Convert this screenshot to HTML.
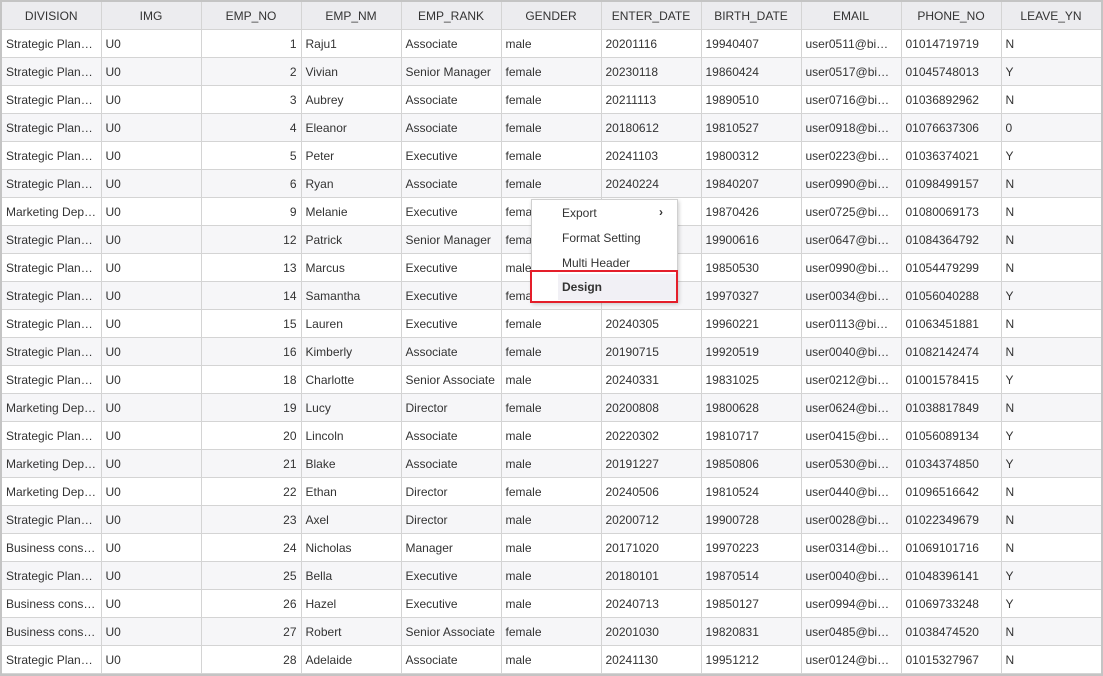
<!DOCTYPE html>
<html><head><meta charset="utf-8"><style>
body{margin:0;width:1103px;height:676px;overflow:hidden;background:#fff;font-family:"Liberation Sans","Noto Sans CJK KR",sans-serif;font-size:12px;color:#333}
.frame{position:absolute;left:0;top:0;width:1099px;height:672px;border:2px solid #c4c4c4;overflow:hidden}
table{border-collapse:collapse;table-layout:fixed;position:absolute;left:0;top:0;width:1099px}
td,th{border-right:1px solid #d4d4d4;border-bottom:1px solid #d4d4d4;height:27px;padding:0 4px;white-space:nowrap;overflow:hidden;text-overflow:ellipsis;font-weight:normal}
th{background:#ececef;height:27px;color:#333;text-align:center}
tr:nth-child(odd) td{background:#f6f6f8}
td.r{text-align:right}
.menu{position:absolute;left:531px;top:199px;width:145px;height:101px;background:#fff;border:1px solid #d0d0d0;box-shadow:1px 2px 4px rgba(0,0,0,.2)}
.mi{position:absolute;left:30px;font-size:12px;color:#333}
.sel{position:absolute;left:558px;top:274px;width:118px;height:26px;background:#f1f0f5}
.red{position:absolute;left:530px;top:270px;width:144px;height:29px;border:2px solid #e41e2a}
</style></head><body>
<div class="frame">
<table>
<colgroup><col style="width:99px"><col style="width:100px"><col style="width:100px"><col style="width:100px"><col style="width:100px"><col style="width:100px"><col style="width:100px"><col style="width:100px"><col style="width:100px"><col style="width:100px"><col style="width:100px"></colgroup>
<tr><th>DIVISION</th><th>IMG</th><th>EMP_NO</th><th>EMP_NM</th><th>EMP_RANK</th><th>GENDER</th><th>ENTER_DATE</th><th>BIRTH_DATE</th><th>EMAIL</th><th>PHONE_NO</th><th>LEAVE_YN</th></tr>
<tr><td>Strategic Planning</td><td>U0</td><td class="r">1</td><td>Raju1</td><td>Associate</td><td>male</td><td>20201116</td><td>19940407</td><td>user0511@bimatrix</td><td>01014719719</td><td>N</td></tr>
<tr><td>Strategic Planning</td><td>U0</td><td class="r">2</td><td>Vivian</td><td>Senior Manager</td><td>female</td><td>20230118</td><td>19860424</td><td>user0517@bimatrix</td><td>01045748013</td><td>Y</td></tr>
<tr><td>Strategic Planning</td><td>U0</td><td class="r">3</td><td>Aubrey</td><td>Associate</td><td>female</td><td>20211113</td><td>19890510</td><td>user0716@bimatrix</td><td>01036892962</td><td>N</td></tr>
<tr><td>Strategic Planning</td><td>U0</td><td class="r">4</td><td>Eleanor</td><td>Associate</td><td>female</td><td>20180612</td><td>19810527</td><td>user0918@bimatrix</td><td>01076637306</td><td>0</td></tr>
<tr><td>Strategic Planning</td><td>U0</td><td class="r">5</td><td>Peter</td><td>Executive</td><td>female</td><td>20241103</td><td>19800312</td><td>user0223@bimatrix</td><td>01036374021</td><td>Y</td></tr>
<tr><td>Strategic Planning</td><td>U0</td><td class="r">6</td><td>Ryan</td><td>Associate</td><td>female</td><td>20240224</td><td>19840207</td><td>user0990@bimatrix</td><td>01098499157</td><td>N</td></tr>
<tr><td>Marketing Department</td><td>U0</td><td class="r">9</td><td>Melanie</td><td>Executive</td><td>female</td><td>20200101</td><td>19870426</td><td>user0725@bimatrix</td><td>01080069173</td><td>N</td></tr>
<tr><td>Strategic Planning</td><td>U0</td><td class="r">12</td><td>Patrick</td><td>Senior Manager</td><td>female</td><td>20200101</td><td>19900616</td><td>user0647@bimatrix</td><td>01084364792</td><td>N</td></tr>
<tr><td>Strategic Planning</td><td>U0</td><td class="r">13</td><td>Marcus</td><td>Executive</td><td>male</td><td>20200101</td><td>19850530</td><td>user0990@bimatrix</td><td>01054479299</td><td>N</td></tr>
<tr><td>Strategic Planning</td><td>U0</td><td class="r">14</td><td>Samantha</td><td>Executive</td><td>female</td><td>20200101</td><td>19970327</td><td>user0034@bimatrix</td><td>01056040288</td><td>Y</td></tr>
<tr><td>Strategic Planning</td><td>U0</td><td class="r">15</td><td>Lauren</td><td>Executive</td><td>female</td><td>20240305</td><td>19960221</td><td>user0113@bimatrix</td><td>01063451881</td><td>N</td></tr>
<tr><td>Strategic Planning</td><td>U0</td><td class="r">16</td><td>Kimberly</td><td>Associate</td><td>female</td><td>20190715</td><td>19920519</td><td>user0040@bimatrix</td><td>01082142474</td><td>N</td></tr>
<tr><td>Strategic Planning</td><td>U0</td><td class="r">18</td><td>Charlotte</td><td>Senior Associate</td><td>male</td><td>20240331</td><td>19831025</td><td>user0212@bimatrix</td><td>01001578415</td><td>Y</td></tr>
<tr><td>Marketing Department</td><td>U0</td><td class="r">19</td><td>Lucy</td><td>Director</td><td>female</td><td>20200808</td><td>19800628</td><td>user0624@bimatrix</td><td>01038817849</td><td>N</td></tr>
<tr><td>Strategic Planning</td><td>U0</td><td class="r">20</td><td>Lincoln</td><td>Associate</td><td>male</td><td>20220302</td><td>19810717</td><td>user0415@bimatrix</td><td>01056089134</td><td>Y</td></tr>
<tr><td>Marketing Department</td><td>U0</td><td class="r">21</td><td>Blake</td><td>Associate</td><td>male</td><td>20191227</td><td>19850806</td><td>user0530@bimatrix</td><td>01034374850</td><td>Y</td></tr>
<tr><td>Marketing Department</td><td>U0</td><td class="r">22</td><td>Ethan</td><td>Director</td><td>female</td><td>20240506</td><td>19810524</td><td>user0440@bimatrix</td><td>01096516642</td><td>N</td></tr>
<tr><td>Strategic Planning</td><td>U0</td><td class="r">23</td><td>Axel</td><td>Director</td><td>male</td><td>20200712</td><td>19900728</td><td>user0028@bimatrix</td><td>01022349679</td><td>N</td></tr>
<tr><td>Business consulting</td><td>U0</td><td class="r">24</td><td>Nicholas</td><td>Manager</td><td>male</td><td>20171020</td><td>19970223</td><td>user0314@bimatrix</td><td>01069101716</td><td>N</td></tr>
<tr><td>Strategic Planning</td><td>U0</td><td class="r">25</td><td>Bella</td><td>Executive</td><td>male</td><td>20180101</td><td>19870514</td><td>user0040@bimatrix</td><td>01048396141</td><td>Y</td></tr>
<tr><td>Business consulting</td><td>U0</td><td class="r">26</td><td>Hazel</td><td>Executive</td><td>male</td><td>20240713</td><td>19850127</td><td>user0994@bimatrix</td><td>01069733248</td><td>Y</td></tr>
<tr><td>Business consulting</td><td>U0</td><td class="r">27</td><td>Robert</td><td>Senior Associate</td><td>female</td><td>20201030</td><td>19820831</td><td>user0485@bimatrix</td><td>01038474520</td><td>N</td></tr>
<tr><td>Strategic Planning</td><td>U0</td><td class="r">28</td><td>Adelaide</td><td>Associate</td><td>male</td><td>20241130</td><td>19951212</td><td>user0124@bimatrix</td><td>01015327967</td><td>N</td></tr>
</table>
</div>
<div class="menu">
<div class="mi" style="top:6px">Export</div>
<div style="position:absolute;left:127px;top:5px;font-size:12px;font-weight:bold">›</div>
<div class="mi" style="top:31px">Format Setting</div>
<div class="mi" style="top:56px">Multi Header</div>
</div>
<div class="sel"></div>
<div class="red"></div>
<div style="position:absolute;left:562px;top:280px;font-size:12px;font-weight:bold;color:#333">Design</div>
</body></html>
